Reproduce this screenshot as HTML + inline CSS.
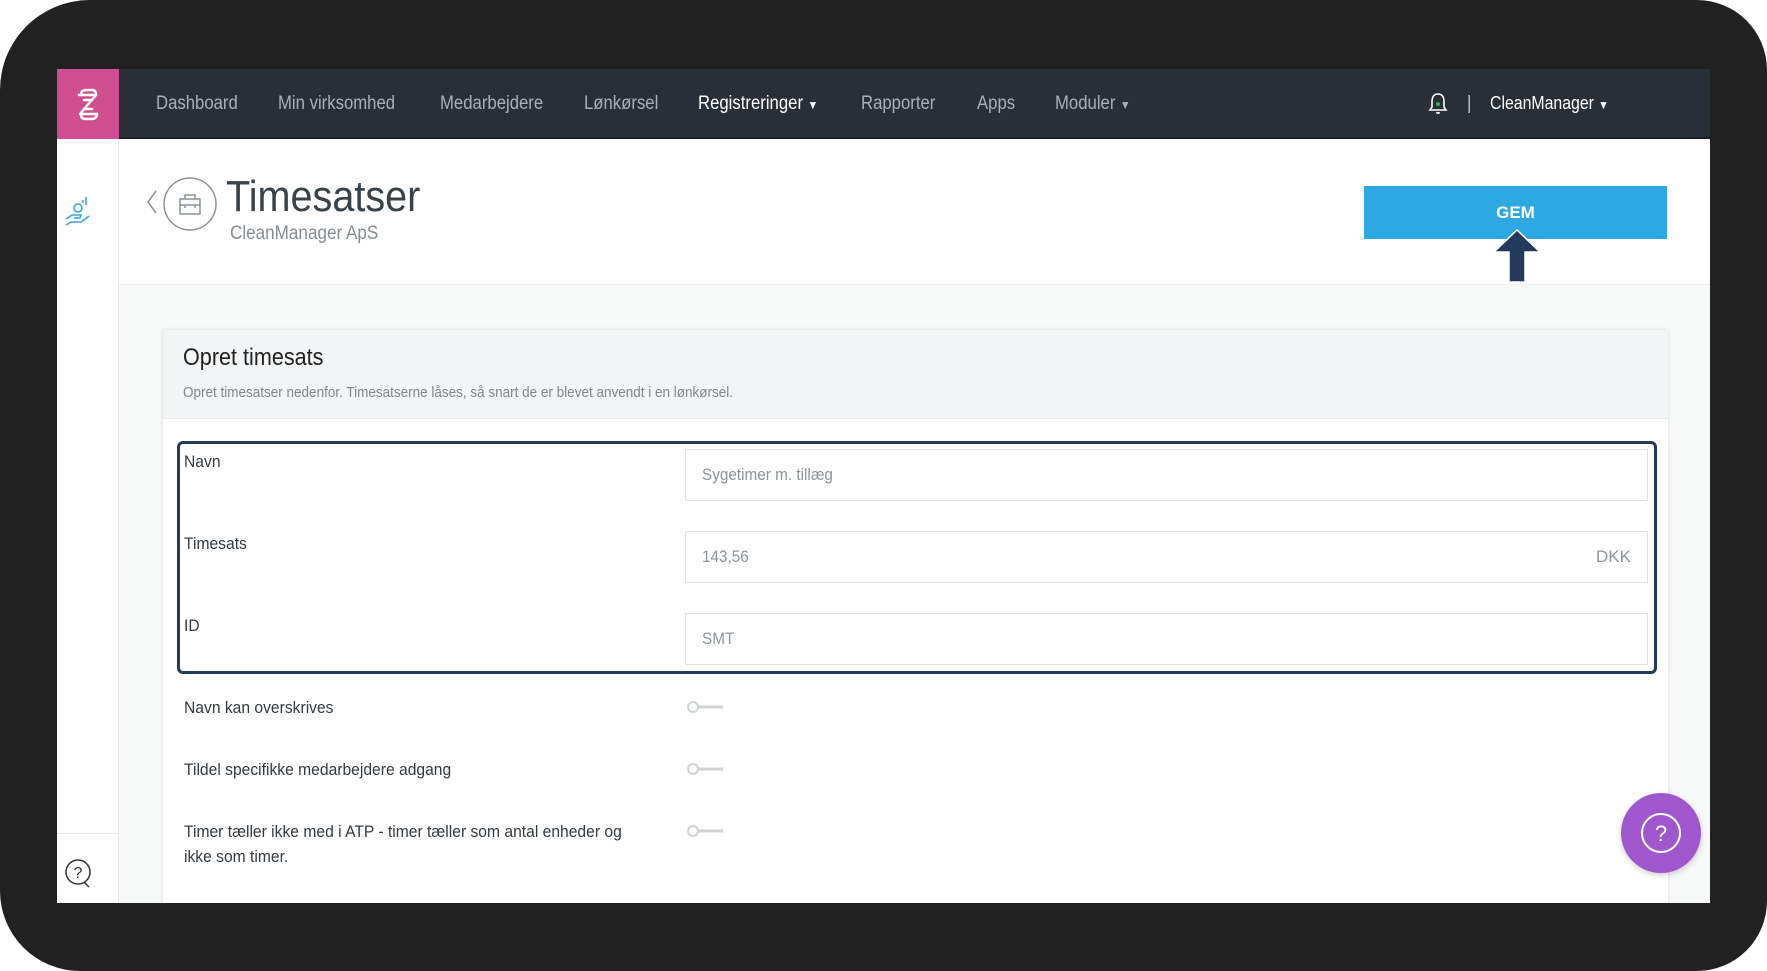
<!DOCTYPE html>
<html><head><meta charset="utf-8"><style>
*{margin:0;padding:0;box-sizing:border-box}
body{width:1767px;height:971px;background:#fff;overflow:hidden;position:relative;font-family:"Liberation Sans",sans-serif}
.bezel{position:absolute;left:0;top:0;width:1767px;height:971px;background:#222122;border-radius:90px 70px 70px 80px}
.app{position:absolute;left:57px;top:69px;width:1653px;height:834px;background:#f7f8f8;overflow:hidden}
.nav{position:absolute;left:0;top:0;width:1653px;height:70px;background:#2a2f37;border-bottom:2px solid #1a1d22}
.logo{position:absolute;left:0;top:0;width:62px;height:70px;background:#d04d8f}
.ni{position:absolute;top:24px;font-size:19px;color:#aab0b8;transform:scaleX(.88);transform-origin:0 50%;white-space:nowrap}
.side{position:absolute;left:0;top:70px;width:62px;height:764px;background:#fff;border-right:1px solid #e6e8ea}
.head{position:absolute;left:62px;top:70px;width:1591px;height:146px;background:#fff;border-bottom:1px solid #eceeef}
.card{position:absolute;left:106px;top:261px;width:1505px;height:600px;background:#fff;box-shadow:0 0 4px rgba(0,0,0,.12)}
.ch{position:relative;height:89px;background:#f3f4f5;border-bottom:1px solid #e8eaeb}
.sx{display:inline-block;transform:scaleX(.9);transform-origin:0 50%;white-space:nowrap}
.lbl{position:absolute;left:127px;font-size:17px;color:#333a40;transform:scaleX(.92);transform-origin:0 50%;white-space:nowrap}
.inp{position:absolute;left:628px;width:963px;height:52px;border:1px solid #dfe2e3;background:#fff;font-size:17px;color:#8c9498;padding:15px 16px}
.tog{position:absolute;left:629px;width:38px;height:14px}
</style></head><body>
<div class="bezel"></div>
<div class="app">
 <div class="nav">
  <div class="logo"><svg width="62" height="70"><g fill="none" stroke="#fff" stroke-width="2.5" stroke-linejoin="round" stroke-linecap="round"><path d="M22 26h17l-16 19h17"/><path d="M24 26c0-4 2-5 6-5h5c3 0 4 2 4 5M24 45c0 3 1 5 4 5h6c4 0 6-2 6-5"/><path d="M27 31l8 0M35 40h-8"/></g></svg></div>
  <span class="ni" style="left:99px">Dashboard</span>
  <span class="ni" style="left:221px">Min virksomhed</span>
  <span class="ni" style="left:383px">Medarbejdere</span>
  <span class="ni" style="left:527px">Lønkørsel</span>
  <span class="ni" style="left:641px;color:#fff">Registreringer <span style="font-size:12px">▼</span></span>
  <span class="ni" style="left:804px">Rapporter</span>
  <span class="ni" style="left:920px">Apps</span>
  <span class="ni" style="left:998px">Moduler <span style="font-size:12px">▼</span></span>
  <svg style="position:absolute;left:1370px;top:22px" width="22" height="26"><path d="M11 3c-5 0-6 4-6 8v5l-2 3h16l-2-3v-5c0-4-1-8-6-8z" fill="none" stroke="#fff" stroke-width="1.6"/><circle cx="11" cy="13" r="2" fill="#3bb34a"/><path d="M9 21a2 2 0 0 0 4 0" fill="#fff"/></svg>
  <span class="ni" style="left:1410px;color:#ccc">|</span>
  <span class="ni" style="left:1433px;color:#fff;font-size:18px">CleanManager <span style="font-size:12px">▼</span></span>
 </div>
 <div class="side">
  <svg style="position:absolute;left:6px;top:56px" width="30" height="34"><g fill="none" stroke="#3aa3e3" stroke-width="1.6"><circle cx="15" cy="13" r="4"/><path d="M3 24l6-4h9l-1 3h-6M3 30l5-3h10l8-6"/><path d="M23 2v8M20 5v3"/></g></svg>
  <div style="position:absolute;left:0;top:694px;width:62px;border-top:1px solid #e6e8ea"></div>
  <svg style="position:absolute;left:7px;top:718px" width="28" height="32"><circle cx="14" cy="15" r="12" fill="none" stroke="#333" stroke-width="1.5"/><path d="M20 25l5 5" stroke="#333" stroke-width="1.5"/><text x="14" y="21" text-anchor="middle" font-size="16" font-family="Liberation Sans" fill="#333">?</text></svg>
 </div>
 <div class="head">
  <svg style="position:absolute;left:10px;top:30px" width="90" height="66"><path d="M27 22l-8 11 8 11" fill="none" stroke="#8b9296" stroke-width="1.5"/><circle cx="61" cy="35" r="26" fill="none" stroke="#8b9296" stroke-width="1.5"/><rect x="51" y="30" width="20" height="15" fill="none" stroke="#8b9296" stroke-width="1.5"/><path d="M56 30v-4h10v4M51 36h20M56 36v3M66 36v3" fill="none" stroke="#8b9296" stroke-width="1.5"/></svg>
  <div style="position:absolute;left:107px;top:33px;font-size:44px;color:#3b4247" class="sx">Timesatser</div>
  <div style="position:absolute;left:111px;top:84px;font-size:19px;color:#858d92" class="sx">CleanManager ApS</div>
  <div style="position:absolute;left:1245px;top:47px;width:303px;height:53px;background:#2ea8e2;color:#fff;font-size:17px;font-weight:bold;text-align:center;line-height:53px">GEM</div>
  <svg style="position:absolute;left:1372px;top:88px" width="52" height="58"><path d="M26 3l23 22h-15v30h-16v-30h-15z" fill="#233a5c" stroke="#fff" stroke-width="1.5"/></svg>
 </div>
 <div class="card">
  <div class="ch">
   <div style="position:absolute;left:20px;top:14px;font-size:24px;color:#222" class="sx">Opret timesats</div>
   <div style="position:absolute;left:20px;top:54px;font-size:15px;color:#7f878c" class="sx">Opret timesatser nedenfor. Timesatserne låses, så snart de er blevet anvendt i en lønkørsel.</div>
  </div>
 </div>
 <div style="position:absolute;left:120px;top:372px;width:1480px;height:233px;border:3px solid #233a5c;border-radius:6px"></div>
 <div class="lbl" style="top:383px">Navn</div>
 <div class="lbl" style="top:465px">Timesats</div>
 <div class="lbl" style="top:547px">ID</div>
 <div class="inp" style="top:380px"><span class="sx">Sygetimer m. tillæg</span></div>
 <div class="inp" style="top:462px"><span class="sx">143,56</span><span style="float:right">DKK</span></div>
 <div class="inp" style="top:544px"><span class="sx">SMT</span></div>
 <div class="lbl" style="top:629px">Navn kan overskrives</div>
 <div class="lbl" style="top:691px">Tildel specifikke medarbejdere adgang</div>
 <div class="lbl" style="top:750px;line-height:25px">Timer tæller ikke med i ATP - timer tæller som antal enheder og<br>ikke som timer.</div>
 <svg class="tog" style="top:631px" width="38" height="14"><line x1="12" y1="7" x2="37" y2="7" stroke="#cfd3d5" stroke-width="3"/><circle cx="7" cy="7" r="5" fill="#fff" stroke="#cfd3d5" stroke-width="2"/></svg>
 <svg class="tog" style="top:693px" width="38" height="14"><line x1="12" y1="7" x2="37" y2="7" stroke="#cfd3d5" stroke-width="3"/><circle cx="7" cy="7" r="5" fill="#fff" stroke="#cfd3d5" stroke-width="2"/></svg>
 <svg class="tog" style="top:755px" width="38" height="14"><line x1="12" y1="7" x2="37" y2="7" stroke="#cfd3d5" stroke-width="3"/><circle cx="7" cy="7" r="5" fill="#fff" stroke="#cfd3d5" stroke-width="2"/></svg>
 <div style="position:absolute;left:1564px;top:724px;width:80px;height:80px;border-radius:50%;background:#a056cc;box-shadow:0 2px 6px rgba(0,0,0,.2)">
  <svg width="80" height="80"><circle cx="40" cy="40" r="19" fill="none" stroke="#fff" stroke-width="2"/><text x="40" y="48" text-anchor="middle" font-size="22" font-family="Liberation Sans" fill="#fff">?</text></svg>
 </div>
</div>
</body></html>
